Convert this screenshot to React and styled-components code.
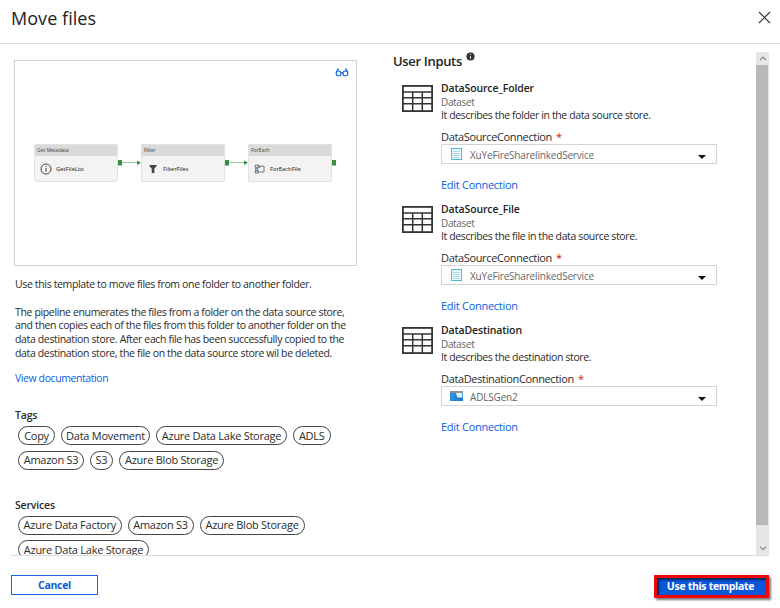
import React from "react";
import styled, { createGlobalStyle } from "styled-components";

const Global = createGlobalStyle`
  * { box-sizing: border-box; }
  body { margin: 0; background: #fff; color: #2b2b2b; font-family: "Open Sans", "Noto Sans", sans-serif; }
  button { font-family: inherit; }
  svg { display: block; flex: none; }
`;

const Dialog = styled.div`
  width: 780px;
  height: 608px;
  display: flex;
  flex-direction: column;
  overflow: hidden;
`;

const Header = styled.header`
  height: 44px;
  flex: none;
  display: flex;
  justify-content: space-between;
  align-items: flex-start;
  padding: 5px 9px 0 11px;
  border-bottom: 1px solid #dedede;
`;

const Title = styled.h1`
  margin: 0;
  font-size: 18px;
  line-height: 26px;
  font-weight: 400;
  letter-spacing: 0.05px;
  color: #222;
`;

const CloseButton = styled.button`
  margin-top: 6px;
  padding: 0;
  border: 0;
  background: none;
`;

const Body = styled.main`
  height: 512px;
  flex: none;
  display: flex;
  margin: 0 11px;
  overflow: hidden;
  border-bottom: 1px solid #dadada;
`;

const Overview = styled.section`
  width: 382px;
  flex: none;
  padding: 16px 0 0 3px;
`;

const Preview = styled.div`
  width: 343px;
  height: 206px;
  border: 1px solid #d2d2d2;
  display: flex;
  flex-direction: column;
`;

const PreviewTools = styled.div`
  display: flex;
  justify-content: flex-end;
  padding: 7px 7px 0 0;
  height: 83px;
`;

const Flow = styled.div`
  display: flex;
  padding-left: 19px;
`;

const Node = styled.div`
  width: 84px;
  height: 38px;
  background: #f3f3f3;
  border: 1px solid #e2e2e2;
  border-radius: 1px;
`;

const NodeType = styled.div`
  height: 11px;
  padding-left: 2px;
  background: #dadada;
  font-size: 5.2px;
  line-height: 11px;
  letter-spacing: -0.1px;
  color: #444;
`;

const NodeBody = styled.div`
  display: flex;
  align-items: center;
  height: 25px;
  padding-left: 5px;
`;

const NodeIcon = styled.div`
  width: 16px;
`;

const NodeName = styled.span`
  font-size: 6px;
  letter-spacing: -0.1px;
  color: #222;
`;

const Link = styled.div`
  width: ${(p) => (p.$last ? 5 : 23)}px;
  padding-top: 15px;
`;

const Paragraph = styled.p`
  width: 350px;
  margin: ${(p) => p.$top}px 0 0;
  padding-left: 1px;
  font-size: 10.5px;
  line-height: 13.7px;
  letter-spacing: -0.355px;
  white-space: pre-line;
`;

const TextLink = styled.a`
  display: block;
  margin-top: ${(p) => p.$top}px;
  padding-left: ${(p) => p.$indent || 0}px;
  font-size: ${(p) => (p.$indent ? 10.5 : 11)}px;
  line-height: 14px;
  letter-spacing: ${(p) => (p.$indent ? -0.41 : -0.28)}px;
  color: #0b5ee0;
`;

const GroupTitle = styled.h3`
  margin: ${(p) => p.$top}px 0 4px;
  padding-left: 1px;
  font-size: 10.5px;
  line-height: 14px;
  font-weight: 600;
  letter-spacing: -0.18px;
`;

const Chips = styled.div`
  display: flex;
  flex-wrap: wrap;
  gap: 5.5px 6px;
  padding-left: 4px;
  width: 340px;
`;

const Chip = styled.span`
  width: ${(p) => p.$w}px;
  height: 19px;
  border: 1px solid #444;
  border-radius: 10px;
  display: flex;
  align-items: center;
  justify-content: center;
  font-size: 11px;
  line-height: 16px;
  letter-spacing: -0.26px;
  white-space: nowrap;
`;

const Inputs = styled.section`
  flex: 1;
  padding-top: 8px;
`;

const InputsTitle = styled.h2`
  margin: 0;
  height: 29px;
  display: flex;
  gap: 4px;
  font-size: 13px;
  line-height: 18px;
  font-weight: 600;
  letter-spacing: -0.33px;
  color: #222;
`;

const InfoDot = styled.svg`
  margin-top: 0;
`;

const Item = styled.article`
  display: flex;
  height: 121px;
  padding-left: 9px;
  gap: 8px;
`;

const TableIcon = styled.svg`
  margin-top: 4px;
`;

const Fields = styled.div`
  width: 276px;
`;

const ItemName = styled.div`
  font-size: 10.5px;
  line-height: 14px;
  font-weight: 600;
  letter-spacing: -0.13px;
  color: #222;
`;

const Kind = styled.div`
  font-size: 10px;
  line-height: 14px;
  letter-spacing: -0.36px;
  color: #666;
`;

const About = styled.div`
  font-size: 10.5px;
  line-height: 13px;
  letter-spacing: -0.38px;
`;

const Label = styled.div`
  margin-top: 8px;
  font-size: 11px;
  line-height: 14px;
  letter-spacing: -0.35px;
`;

const Required = styled.span`
  margin-left: 4px;
  color: #c4161c;
`;

const Select = styled.div`
  height: 20px;
  display: flex;
  align-items: center;
  padding: 0 10px 0 8px;
  border: 1px solid #d4d4d4;
  font-size: 10px;
  letter-spacing: -0.18px;
  color: #666;
`;

const SelectValue = styled.span`
  flex: 1;
  padding: 1px 0 0 7px;
  line-height: 16px;
`;

const Caret = styled.svg`
  margin-top: 5px;
`;

const Scrollbar = styled.div`
  width: 13px;
  flex: none;
  margin-top: 8px;
  background: #e6e6e6;
  display: flex;
  flex-direction: column;
`;

const ScrollArrow = styled.div`
  height: ${(p) => p.$h}px;
  display: flex;
  justify-content: center;
  align-items: ${(p) => p.$align};
  padding-bottom: ${(p) => p.$pad}px;
`;

const Thumb = styled.div`
  height: 460px;
  margin: 0 1px 0 0;
  background: #b8b8b8;
`;

const Footer = styled.footer`
  display: flex;
  justify-content: space-between;
  align-items: flex-start;
  padding: 19px 11px 0;
`;

const Button = styled.button`
  width: ${(p) => (p.$primary ? 115 : 87)}px;
  height: ${(p) => (p.$primary ? 23 : 20)}px;
  padding: ${(p) => (p.$primary ? "0 2px 0 0" : "1px 0 0")};
  font-size: 10.5px;
  line-height: 15px;
  font-weight: 700;
  letter-spacing: -0.32px;
  color: ${(p) => (p.$primary ? "#fff" : "#0b5cd8")};
  background: ${(p) => (p.$primary ? "#0b57d9" : "#fff")};
  border: ${(p) => (p.$primary ? "3px solid #f00606" : "1px solid #1465e0")};
  box-shadow: ${(p) => (p.$primary ? "2px 2px 2px #0008, inset 2px 2px 2px #0009" : "none")};
`;

const CloseIcon = () => (
  <svg width="13" height="13" viewBox="0 0 13 13" stroke="#333" strokeWidth="1.1">
    <path d="M1 1 12 12M12 1 1 12" />
  </svg>
);

const Glasses = () => (
  <svg width="14" height="9" viewBox="0 0 14 9" fill="none" stroke="#1465e0" strokeWidth="1.1">
    <circle cx="3.6" cy="5.4" r="2.4" />
    <circle cx="10.4" cy="5.4" r="2.4" />
    <path d="M6 5Q7 4.3 8 5M1.2 5 2.6 1.2H4.2M12.8 5 11.4 1.2H9.8" />
  </svg>
);

const nodeIcons = {
  info: (
    <svg width="12" height="12" viewBox="0 0 12 12" fill="none" stroke="#333">
      <circle cx="6" cy="6" r="5" strokeWidth=".9" />
      <path d="M6 5V8.8M6 3V4" strokeWidth="1" />
    </svg>
  ),
  filter: (
    <svg width="12" height="12" viewBox="0 0 12 12" fill="#444">
      <path d="M2.5 2h7v1.3L7.4 5.6V10H4.7V5.6L2.5 3.3z" />
    </svg>
  ),
  loop: (
    <svg width="12" height="12" viewBox="0 0 12 12" fill="none" stroke="#555" strokeWidth=".8">
      <path d="M1.4 2h3v2.4h-3zM1.4 5.6h2.4V7.4H1.4zM1.4 8h3v2h-3zM5.3 3.2H10V9H5.3M4.4 3.2h1.5M5.5 3.2V5" />
    </svg>
  ),
};

const Connector = ({ last }) => (
  <svg width={last ? 5 : 23} height="8" viewBox={last ? "0 0 5 8" : "0 0 23 8"} fill="#3b8f42">
    <rect x="0" y="1" width="4" height="5.5" />
    {!last && <path d="M4 3.5H20V4.1H4zM19 1.6 23 3.8 19 6z" />}
  </svg>
);

const Grid = () => (
  <TableIcon width="31" height="27" viewBox="0 0 31 27" fill="none" stroke="#333">
    <rect x=".9" y=".9" width="29.2" height="25.2" strokeWidth="1.8" />
    <path d="M1 7H30M1 12.8H30M1 18.8H30M10.7 7V26M20.3 7V26" strokeWidth="1.5" />
  </TableIcon>
);

const FileIcon = () => (
  <svg width="13" height="14" viewBox="0 0 13 14" fill="none">
    <rect x="1.6" y="1.5" width="10" height="11" fill="#eaf7fc" stroke="#4fb4d8" />
    <path d="M3 4.5H10M3 6.5H10M3 8.5H10M3 10.5H10" stroke="#a5daee" strokeWidth=".9" />
  </svg>
);

const LakeIcon = () => (
  <svg width="13" height="14" viewBox="0 0 13 14">
    <path d="M0 2h13v10H0z" fill="#1f7fd0" />
    <path d="M0 2h13v2H0z" fill="#8b9499" />
    <path d="M6 4h6.3v4.5H7.2z" fill="#e3f1fb" />
    <path d="M0 4h6L4 12H0z" fill="#2b8ddd" />
  </svg>
);

const Arrow = ({ down }) => (
  <svg width="8" height="5" viewBox="0 0 8 5" fill="none" stroke="#8a8a8a" strokeWidth="1.1">
    <path d={down ? "M1 .7 4 3.7 7 .7" : "M1 4 4 1 7 4"} />
  </svg>
);

const nodes = [
  { type: "Get Metadata", name: "GetFileList", icon: "info" },
  { type: "Filter", name: "FilterFiles", icon: "filter" },
  { type: "ForEach", name: "ForEachFile", icon: "loop" },
];

const description = [
  "The pipeline enumerates the files from a folder on the data source store,",
  "and then copies each of the files from this folder to another folder on the",
  "data destination store. After each file has been successfully copied to the",
  "data destination store, the file on the data source store wil be deleted.",
].join("\n");

const tags = [
  ["Copy", 37], ["Data Movement", 89], ["Azure Data Lake Storage", 131], ["ADLS", 37.5],
  ["Amazon S3", 66], ["S3", 23], ["Azure Blob Storage", 105],
];

const services = [
  ["Azure Data Factory", 103.5], ["Amazon S3", 66], ["Azure Blob Storage", 105], ["Azure Data Lake Storage", 131],
];

const inputs = [
  { name: "DataSource_Folder", about: "It describes the folder in the data source store.", label: "DataSourceConnection", value: "XuYeFireSharelinkedService", Icon: FileIcon },
  { name: "DataSource_File", about: "It describes the file in the data source store.", label: "DataSourceConnection", value: "XuYeFireSharelinkedService", Icon: FileIcon },
  { name: "DataDestination", about: "It describes the destination store.", label: "DataDestinationConnection", value: "ADLSGen2", Icon: LakeIcon },
];

const ChipList = ({ items }) => (
  <Chips>
    {items.map(([text, w]) => <Chip key={text} $w={w}>{text}</Chip>)}
  </Chips>
);

export default function App() {
  return (
    <Dialog>
      <Global />
      <Header>
        <Title>Move files</Title>
        <CloseButton aria-label="Close"><CloseIcon /></CloseButton>
      </Header>
      <Body>
        <Overview>
          <Preview>
            <PreviewTools><Glasses /></PreviewTools>
            <Flow>
              {nodes.map((n, i) => (
                <React.Fragment key={n.name}>
                  <Node>
                    <NodeType>{n.type}</NodeType>
                    <NodeBody>
                      <NodeIcon>{nodeIcons[n.icon]}</NodeIcon>
                      <NodeName>{n.name}</NodeName>
                    </NodeBody>
                  </Node>
                  <Link $last={i === 2}><Connector last={i === 2} /></Link>
                </React.Fragment>
              ))}
            </Flow>
          </Preview>
          <Paragraph $top={12}>Use this template to move files from one folder to another folder.</Paragraph>
          <Paragraph $top={14}>{description}</Paragraph>
          <TextLink $top={10} $indent={1}>View documentation</TextLink>
          <GroupTitle $top={23.5}>Tags</GroupTitle>
          <ChipList items={tags} />
          <GroupTitle $top={28}>Services</GroupTitle>
          <ChipList items={services} />
        </Overview>
        <Inputs>
          <InputsTitle>
            User Inputs
            <InfoDot width="9" height="9" viewBox="0 0 9 9">
              <circle cx="4.5" cy="4.5" r="4.1" fill="#333" />
              <path d="M4.5 4v3M4.5 2v1.1" stroke="#ddd" />
            </InfoDot>
          </InputsTitle>
          {inputs.map(({ name, about, label, value, Icon }) => (
            <Item key={name}>
              <Grid />
              <Fields>
                <ItemName>{name}</ItemName>
                <Kind>Dataset</Kind>
                <About>{about}</About>
                <Label>{label}<Required>*</Required></Label>
                <Select>
                  <Icon />
                  <SelectValue>{value}</SelectValue>
                  <Caret width="8" height="4" viewBox="0 0 8 4"><path d="M0 0h8L4 4z" fill="#111" /></Caret>
                </Select>
                <TextLink $top={14.4}>Edit Connection</TextLink>
              </Fields>
            </Item>
          ))}
        </Inputs>
        <Scrollbar>
          <ScrollArrow $h={13} $align="center" $pad={0}><Arrow /></ScrollArrow>
          <Thumb />
          <ScrollArrow $h={30} $align="flex-end" $pad={4}><Arrow down /></ScrollArrow>
        </Scrollbar>
      </Body>
      <Footer>
        <Button>Cancel</Button>
        <Button $primary>Use this template</Button>
      </Footer>
    </Dialog>
  );
}
